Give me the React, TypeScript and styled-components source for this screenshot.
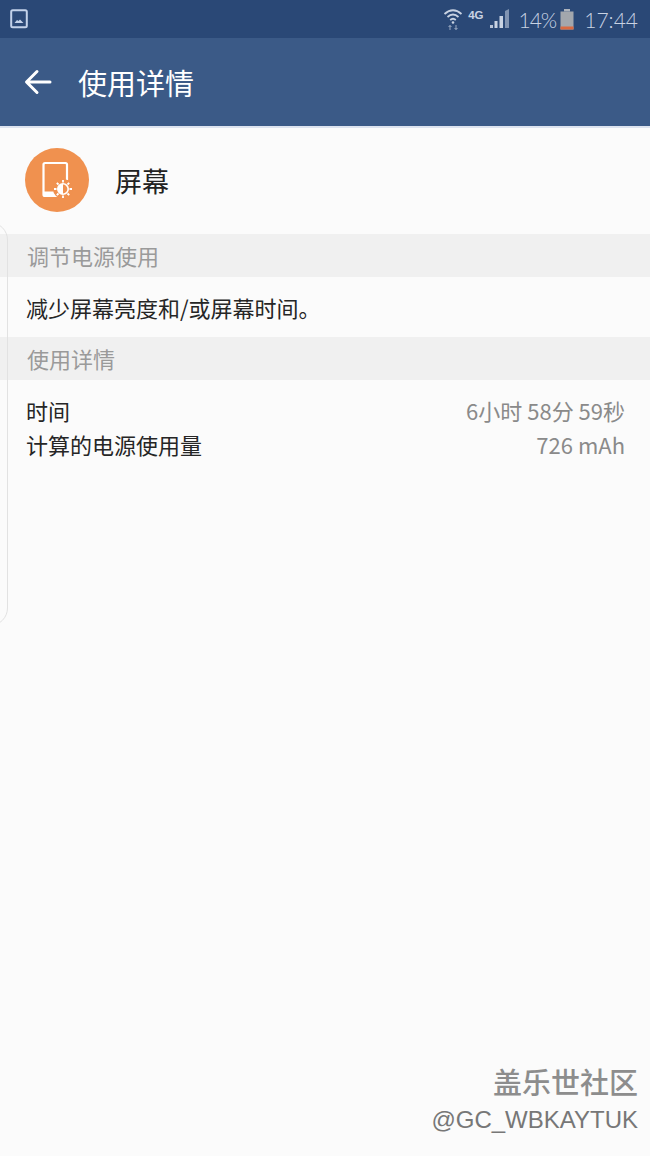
import React from "react";
import styled, { createGlobalStyle } from "styled-components";

const GlobalStyle = createGlobalStyle`
  html, body {
    margin: 0;
    padding: 0;
    background: #fbfbfb;
  }
  body {
    font-family: "Noto Sans CJK SC", "Noto Sans", sans-serif;
  }
`;

const App = () => {
  return (
    <Page>
      <GlobalStyle />
      <StatusBar>
        <PictureIcon />
        <StatusRight>
          <WifiIcon />
          <NetLabel>4G</NetLabel>
          <SignalIcon />
          <Percent>14%</Percent>
          <BatteryIcon />
          <Clock>17:44</Clock>
        </StatusRight>
      </StatusBar>
      <AppBar>
        <BackIcon />
        <AppTitle>使用详情</AppTitle>
      </AppBar>
      <AppHeader>
        <Badge>
          <ScreenIcon />
        </Badge>
        <HeaderName>屏幕</HeaderName>
      </AppHeader>
      <SectionLabel>调节电源使用</SectionLabel>
      <Advice>减少屏幕亮度和/或屏幕时间。</Advice>
      <SectionLabel>使用详情</SectionLabel>
      <Details>
        <DetailRow>
          <DetailName>时间</DetailName>
          <DetailValue>6小时 58分 59秒</DetailValue>
        </DetailRow>
        <DetailRow>
          <DetailName>计算的电源使用量</DetailName>
          <DetailValue>726 mAh</DetailValue>
        </DetailRow>
      </Details>
      <EdgeHandle />
      <Watermark>
        <MarkTitle>盖乐世社区</MarkTitle>
        <MarkUser>@GC_WBKAYTUK</MarkUser>
      </Watermark>
    </Page>
  );
};

export default App;

const PictureIcon = () => (
  <svg width="18" height="20" viewBox="0 0 18 20">
    <rect x="1.2" y="1.2" width="15.6" height="17" rx="1.5" fill="#2d4a78" stroke="#c4d2ea" strokeWidth="2" />
    <path d="M4.5 14 L7 11 L8.5 12 L10 10.5 L13.5 14 Z" fill="#c4d2ea" />
  </svg>
);

const WifiIcon = () => (
  <svg width="20" height="24" viewBox="0 0 20 24" fill="none" stroke="#c9d3e3">
    <path d="M1.5 7 Q10 -0.5 18.5 7" strokeWidth="1.8" />
    <path d="M4.5 10 Q10 5 15.5 10" strokeWidth="1.8" />
    <path d="M7.2 13 Q10 10.5 12.8 13" strokeWidth="1.8" />
    <circle cx="10" cy="15.5" r="1.3" fill="#c9d3e3" stroke="none" />
    <path d="M7 23 V18.5 M5.5 20 L7 18.5 L8.5 20 M13 18 V22.5 M11.5 21 L13 22.5 L14.5 21" strokeWidth="1" opacity="0.7" />
  </svg>
);

const SignalIcon = () => (
  <svg width="20" height="20" viewBox="0 0 20 20" fill="#c9d3e3">
    <rect x="0" y="16" width="3" height="3" opacity="0.9" />
    <rect x="4.5" y="12" width="3" height="7" />
    <rect x="9.5" y="7" width="3.5" height="12" />
    <path d="M15 2 L19 0 V19 H15 Z" opacity="0.55" />
  </svg>
);

const BatteryIcon = () => (
  <svg width="14" height="21" viewBox="0 0 14 21">
    <rect x="4" y="0" width="6" height="2.5" fill="#aeb4bd" />
    <rect x="0.5" y="2.5" width="13" height="18" fill="#a3a7ad" />
    <rect x="0.5" y="17.5" width="13" height="3" fill="#d96a42" />
  </svg>
);

const BackIcon = () => (
  <svg width="28" height="26" viewBox="0 0 28 26" fill="none" stroke="#ffffff" strokeWidth="3" strokeLinecap="round" strokeLinejoin="round">
    <path d="M26 13 H3 M13 2.5 L2.5 13 L13 23.5" />
  </svg>
);

const ScreenIcon = () => (
  <svg width="64" height="64" viewBox="0 0 64 64">
    <path
      d="M34 48 H20 a1.5 1.5 0 0 1 -1.5 -1.5 V16.5 a1.5 1.5 0 0 1 1.5 -1.5 H40.5 a1.5 1.5 0 0 1 1.5 1.5 V32"
      fill="none"
      stroke="#ffffff"
      strokeWidth="2.2"
    />
    <path d="M19 43.5 H34 V49 H19 Z" fill="#ffffff" />
    <circle cx="38" cy="41" r="10" fill="#f0914f" />
    <circle cx="38" cy="41" r="5.2" fill="none" stroke="#ffffff" strokeWidth="1.6" />
    <path d="M38 35.8 a5.2 5.2 0 0 0 0 10.4 Z" fill="#ffffff" />
    <path
      d="M38 32 V34.5 M38 47.5 V50 M29 41 H31.5 M44.5 41 H47 M31.8 34.8 L33.5 36.5 M42.5 45.5 L44.2 47.2 M44.2 34.8 L42.5 36.5 M33.5 45.5 L31.8 47.2"
      stroke="#ffffff"
      strokeWidth="1.8"
    />
  </svg>
);

const Page = styled.div`
  position: relative;
  width: 650px;
  height: 1156px;
  overflow: hidden;
  background: #fbfbfb;
`;

const StatusBar = styled.div`
  height: 38px;
  display: flex;
  justify-content: space-between;
  align-items: center;
  padding: 0 12px 0 10px;
  background: #2a4876;
`;

const StatusRight = styled.div`
  display: flex;
  align-items: center;
  color: #c9d3e3;
`;

const NetLabel = styled.span`
  margin: 0 6px 8px 5px;
  font-family: "Liberation Sans", sans-serif;
  font-size: 11.5px;
  font-weight: 700;
`;

const Percent = styled.span`
  margin: 0 4px 0 9px;
  font-size: 21px;
  font-weight: 300;
  letter-spacing: -1px;
  font-family: Lato, sans-serif;
`;

const Clock = styled.span`
  margin-left: 10px;
  font-size: 21px;
  font-weight: 300;
  font-family: Lato, sans-serif;
`;

const AppBar = styled.div`
  height: 88px;
  display: flex;
  align-items: center;
  gap: 26px;
  padding-left: 24px;
  background: #3b5a87;
  border-bottom: 2px solid #dde3ef;
`;

const AppTitle = styled.div`
  font-size: 29px;
  color: #ffffff;
`;

const AppHeader = styled.div`
  height: 104px;
  display: flex;
  align-items: center;
  gap: 26px;
  padding: 0 25px 2px;
`;

const Badge = styled.div`
  width: 64px;
  height: 64px;
  border-radius: 50%;
  background: #f0914f;
  display: flex;
  align-items: center;
  justify-content: center;
`;

const HeaderName = styled.div`
  font-size: 27px;
  color: #222222;
`;

const SectionLabel = styled.div`
  height: 41px;
  display: flex;
  align-items: center;
  padding: 0 0 2px 27px;
  background: #f0f0f0;
  font-size: 22px;
  color: #9a9a9a;
`;

const Advice = styled.div`
  height: 60px;
  display: flex;
  align-items: center;
  padding-left: 26px;
  font-size: 22px;
  color: #262626;
`;

const Details = styled.div`
  display: flex;
  flex-direction: column;
  gap: 4px;
  padding: 15px 25px 0 26px;
`;

const DetailRow = styled.div`
  height: 30px;
  display: flex;
  justify-content: space-between;
  align-items: center;
`;

const DetailName = styled.div`
  font-size: 22px;
  color: #262626;
`;

const DetailValue = styled.div`
  font-size: 22px;
  color: #8a8a8a;
`;

const EdgeHandle = styled.div`
  position: absolute;
  left: -16px;
  top: 222px;
  width: 22px;
  height: 402px;
  border: 1px solid #e2e2e2;
  border-radius: 0 18px 18px 0;
`;

const Watermark = styled.div`
  position: absolute;
  right: 12px;
  bottom: 18px;
  display: flex;
  flex-direction: column;
  align-items: flex-end;
`;

const MarkTitle = styled.div`
  margin-bottom: 3px;
  font-size: 29px;
  line-height: 36px;
  font-weight: 500;
  color: #8d8d8d;
`;

const MarkUser = styled.div`
  font-family: "Liberation Sans", sans-serif;
  font-size: 24px;
  line-height: 36px;
  color: #777777;
`;
